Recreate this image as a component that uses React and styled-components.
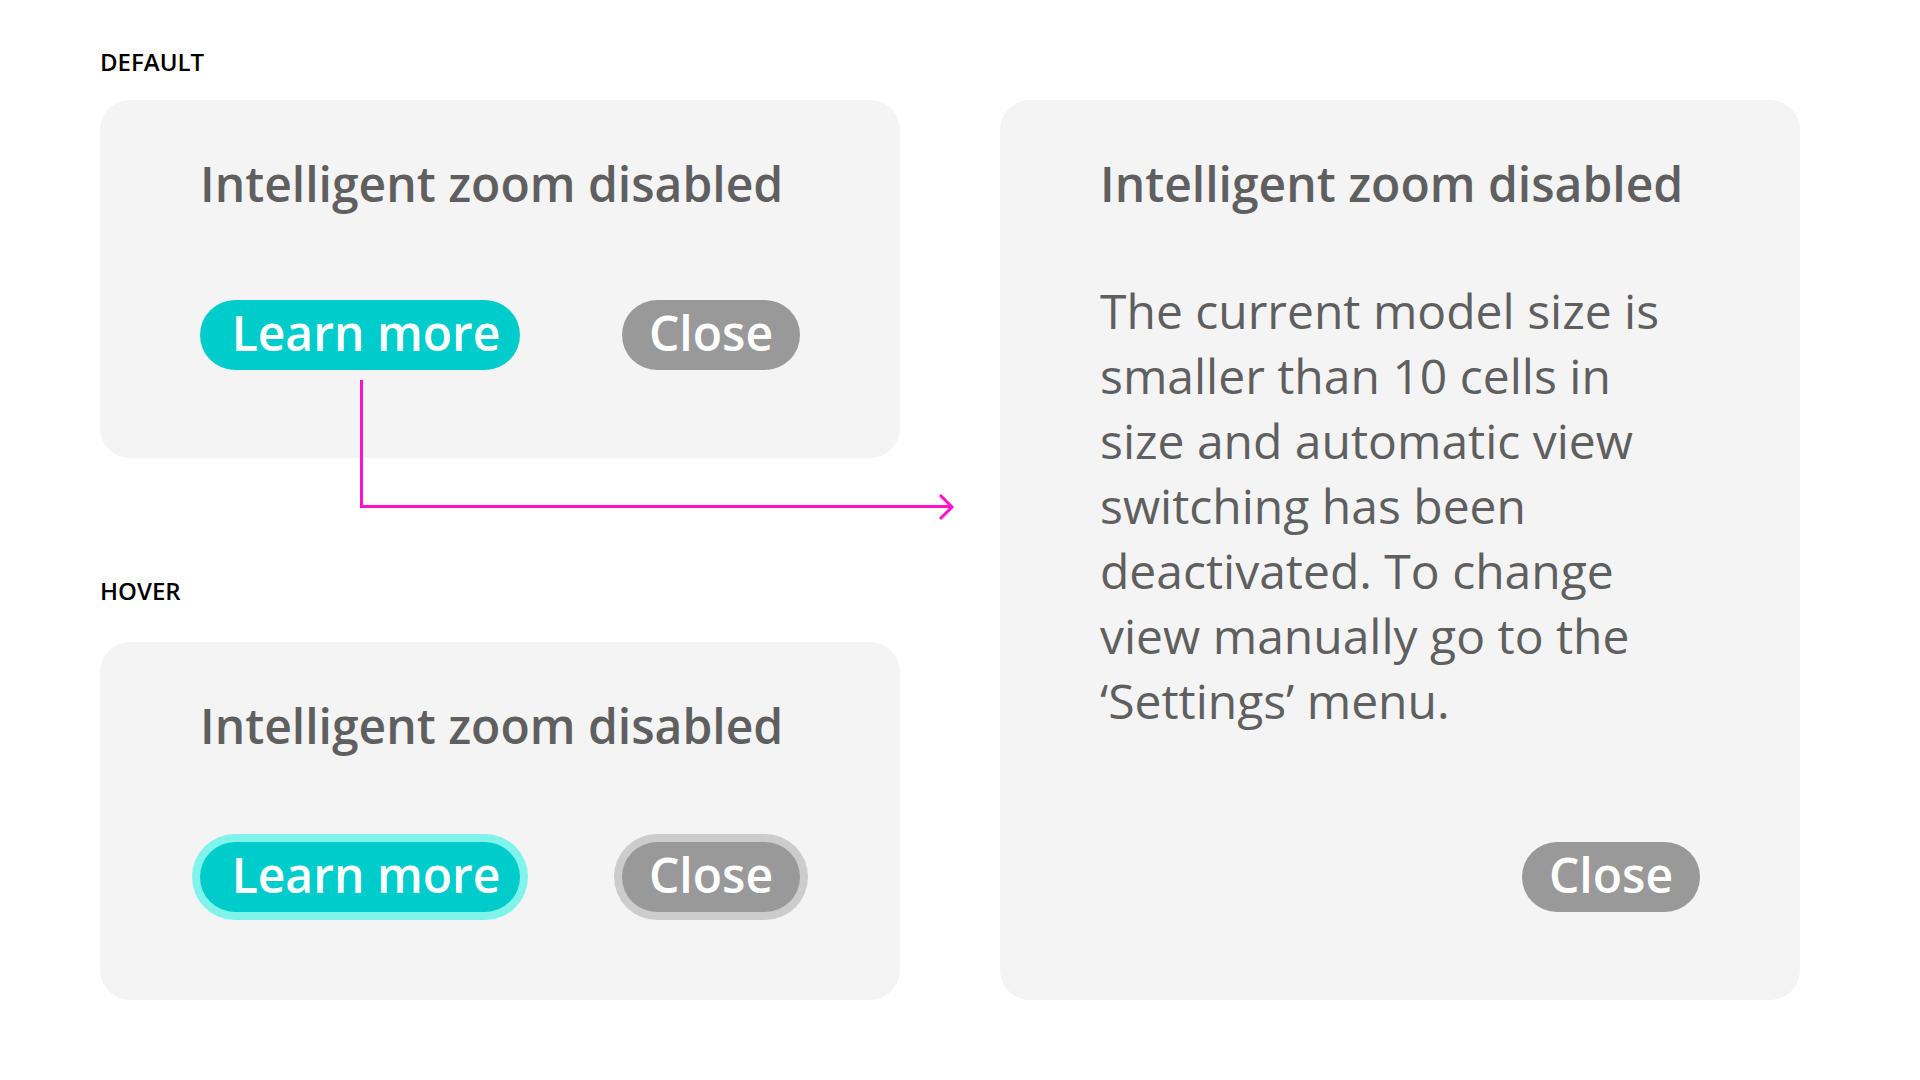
import React from 'react';
import styled, { createGlobalStyle } from 'styled-components';

const GlobalStyle = createGlobalStyle`
    html, body {
        margin: 0;
        padding: 0;
        background: #ffffff;
    }

    body {
        font-family: 'Open Sans', 'Noto Sans', sans-serif;
    }
`;

const Page = styled.div`
    position: relative;
    width: 1920px;
    height: 1080px;
    display: grid;
    grid-template-columns: 800px 800px;
    column-gap: 100px;
    padding-left: 100px;
    box-sizing: border-box;
`;

const Column = styled.div`
    display: flex;
    flex-direction: column;
`;

const StateLabel = styled.p`
    margin: ${(props) => props.$top}px 0 ${(props) => props.$bottom}px;
    font-size: 24px;
    line-height: 32px;
    font-weight: 600;
    color: #000;
`;

const Card = styled.div`
    background-color: #f4f4f4;
    border-radius: 30px;
    padding: 52px 100px 88px;
    box-sizing: border-box;
    height: ${(props) => props.$height}px;
    margin-top: ${(props) => props.$top || 0}px;
    display: flex;
    flex-direction: column;
`;

const Title = styled.h2`
    margin: 0;
    font-size: 48px;
    line-height: 64px;
    font-weight: 600;
    color: #5f5f5f;
    white-space: nowrap;
`;

const Body = styled.p`
    margin: 62px 0 0;
    width: 600px;
    font-size: 48px;
    line-height: 65px;
    font-weight: 400;
    color: #5f5f5f;
`;

const Actions = styled.div`
    display: flex;
    gap: 102px;
    margin-top: ${(props) => (props.$end ? 'auto' : '84px')};
    justify-content: ${(props) => (props.$end ? 'flex-end' : 'flex-start')};
`;

const tones = {
    primary: { bg: '#00cccc', ring: '#80f3eb' },
    secondary: { bg: '#999999', ring: '#cccccc' },
};

const Pill = styled.button`
    width: ${(props) => props.$width}px;
    height: 70px;
    padding: 0 0 4px ${(props) => props.$nudge || 0}px;
    border: none;
    border-radius: 35px;
    background-color: ${(props) => tones[props.$tone].bg};
    box-shadow: ${(props) =>
        props.$hover ? `0 0 0 8px ${tones[props.$tone].ring}` : 'none'};
    color: #fff;
    font-family: inherit;
    font-size: 48px;
    line-height: 66px;
    font-weight: 600;
    text-align: center;
    cursor: pointer;
`;

const Connector = styled.svg`
    position: absolute;
    left: 0;
    top: 0;
    width: 1920px;
    height: 1080px;
    pointer-events: none;
`;

const App = () => {
    return (
        <>
            <GlobalStyle />
            <Page>
                <Column>
                    <StateLabel $top={46} $bottom={22}>
                        DEFAULT
                    </StateLabel>
                    <Card $height={358}>
                        <Title>Intelligent zoom disabled</Title>
                        <Actions>
                            <Pill $tone='primary' $width={320} $nudge={12}>
                                Learn more
                            </Pill>
                            <Pill $tone='secondary' $width={178}>
                                Close
                            </Pill>
                        </Actions>
                    </Card>

                    <StateLabel $top={117} $bottom={35}>
                        HOVER
                    </StateLabel>
                    <Card $height={358}>
                        <Title>Intelligent zoom disabled</Title>
                        <Actions>
                            <Pill
                                $tone='primary'
                                $width={320}
                                $nudge={12}
                                $hover
                            >
                                Learn more
                            </Pill>
                            <Pill $tone='secondary' $width={178} $hover>
                                Close
                            </Pill>
                        </Actions>
                    </Card>
                </Column>

                <Column>
                    <Card $height={900} $top={100}>
                        <Title>Intelligent zoom disabled</Title>
                        <Body>
                            The current model size is smaller than 10 cells in
                            size and automatic view switching has been
                            deactivated. To change view manually go to the
                            ‘Settings’ menu.
                        </Body>
                        <Actions $end>
                            <Pill $tone='secondary' $width={178}>
                                Close
                            </Pill>
                        </Actions>
                    </Card>
                </Column>

                {/* flow arrow from "Learn more" to the expanded card */}
                <Connector viewBox='0 0 1920 1080'>
                    <path
                        d='M361.5 380 V506.5 H950'
                        fill='none'
                        stroke='#ff10cc'
                        strokeWidth='3'
                    />
                    <path
                        d='M940 495 L952 507 L940 519'
                        fill='none'
                        stroke='#ff10cc'
                        strokeWidth='3'
                    />
                </Connector>
            </Page>
        </>
    );
};

export default App;
